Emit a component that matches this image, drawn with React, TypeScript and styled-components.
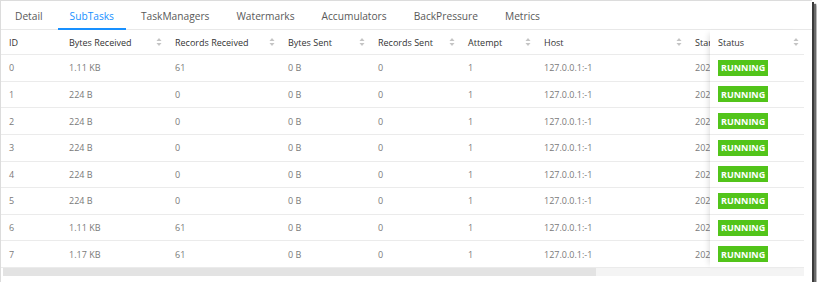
import React from 'react';
import styled, { createGlobalStyle } from 'styled-components';

const GlobalStyle = createGlobalStyle`
  html, body {
    margin: 0;
    padding: 0;
    background: #ffffff;
  }
  body {
    font-family: "Open Sans", "Noto Sans", sans-serif;
  }
`;

const tabs = ['Detail', 'SubTasks', 'TaskManagers', 'Watermarks', 'Accumulators', 'BackPressure', 'Metrics'];

// Start column is cut by the fixed Status column, so it only gets what is visible
const columns = [
  { key: 'id', title: 'ID', width: 60, sorter: false },
  { key: 'bytesIn', title: 'Bytes Received', width: 106, sorter: true },
  { key: 'recordsIn', title: 'Records Received', width: 113, sorter: true },
  { key: 'bytesOut', title: 'Bytes Sent', width: 90, sorter: true },
  { key: 'recordsOut', title: 'Records Sent', width: 90, sorter: true },
  { key: 'attempt', title: 'Attempt', width: 76, sorter: true },
  { key: 'host', title: 'Host', width: 151, sorter: true },
  { key: 'start', title: 'Start', width: 23, sorter: false },
];

const subtasks = [
  { id: '0', bytesIn: '1.11 KB', recordsIn: '61' },
  { id: '1', bytesIn: '224 B', recordsIn: '0' },
  { id: '2', bytesIn: '224 B', recordsIn: '0' },
  { id: '3', bytesIn: '224 B', recordsIn: '0' },
  { id: '4', bytesIn: '224 B', recordsIn: '0' },
  { id: '5', bytesIn: '224 B', recordsIn: '0' },
  { id: '6', bytesIn: '1.11 KB', recordsIn: '61' },
  { id: '7', bytesIn: '1.17 KB', recordsIn: '61' },
].map((r) => ({
  ...r,
  bytesOut: '0 B',
  recordsOut: '0',
  attempt: '1',
  host: '127.0.0.1:-1',
  start: '2020',
  status: 'RUNNING',
}));

const template = columns.map((c) => `${c.width}px`).join(' ');

const Frame = styled.div`
  width: 811px;
  height: 281px;
  border-top: 1px solid #dcdcdc;
  border-left: 1px solid #dcdcdc;
  background: #fff;
  box-shadow: 2px 2px 0 #3a3a3a, 4px 4px 1px #6a6a6a, 5px 5px 2px rgba(0, 0, 0, 0.3);
  display: flex;
  flex-direction: column;
  overflow: hidden;
`;

const TabBar = styled.div`
  display: flex;
  flex-shrink: 0;
  gap: 3px;
  height: 28px;
  padding-left: 2px;
  border-bottom: 1px solid #e8e8e8;
`;

const Tab = styled.div<{ $active?: boolean }>`
  display: flex;
  align-items: center;
  padding: 2px 12px 0;
  font-size: 10.2px;
  color: ${(p) => (p.$active ? '#1890ff' : '#595959')};
  border-bottom: 2px solid ${(p) => (p.$active ? '#1890ff' : 'transparent')};
  margin-bottom: -1px;
`;

const TableBox = styled.div`
  padding-right: 8px;
  display: flex;
  flex-direction: column;
`;

const Body = styled.div`
  display: flex;
`;

const ScrollPart = styled.div`
  width: 709px;
  flex-shrink: 0;
  overflow: hidden;
`;

const GridRow = styled.div<{ $head?: boolean }>`
  display: grid;
  grid-template-columns: ${template};
  height: ${(p) => (p.$head ? '25px' : '26.625px')};
  box-sizing: border-box;
  border-bottom: 1px solid #ebebeb;
`;

const HeadCell = styled.div`
  display: flex;
  align-items: center;
  justify-content: space-between;
  padding: 0 5px 0 8px;
  font-size: 9px;
  color: #333;
  white-space: nowrap;
  overflow: hidden;
  &:last-child {
    padding-right: 0;
  }
`;

const Cell = styled.div`
  display: flex;
  align-items: center;
  padding: 0 8px;
  font-size: 9px;
  color: #7a7a7a;
  white-space: nowrap;
  overflow: hidden;
  &:last-child {
    padding-right: 0;
  }
`;

const FixedCol = styled.div`
  width: 94px;
  flex-shrink: 0;
  background: #fff;
  box-shadow: -5px 0 6px -4px rgba(0, 0, 0, 0.14);
  position: relative;
  z-index: 1;
`;

const FixedRow = styled.div<{ $head?: boolean }>`
  height: ${(p) => (p.$head ? '25px' : '26.625px')};
  box-sizing: border-box;
  border-bottom: 1px solid #ebebeb;
  display: flex;
  align-items: center;
  justify-content: ${(p) => (p.$head ? 'space-between' : 'flex-start')};
  padding: 0 5px 0 8px;
  font-size: 9px;
  color: #333;
  white-space: nowrap;
`;

const Badge = styled.span`
  display: inline-flex;
  align-items: center;
  height: 16px;
  padding: 0 3px;
  background: #52c41a;
  color: #fff;
  font-weight: 700;
  font-size: 9px;
`;

const Scrollbar = styled.div`
  height: 8px;
  margin-left: 2px;
  background: #f4f4f4;
  display: flex;
`;

const Thumb = styled.div`
  width: 593px;
  background: #e3e3e3;
`;

function Sorter() {
  return (
    <svg width="6" height="10" viewBox="0 0 6 10">
      <path d="M3 1 L5.5 4 L0.5 4 Z" fill="#c4c4c4" />
      <path d="M3 9 L5.5 6 L0.5 6 Z" fill="#c4c4c4" />
    </svg>
  );
}

export default function App() {
  return (
    <>
      <GlobalStyle />
      <Frame>
        <TabBar>
          {tabs.map((t) => (
            <Tab key={t} $active={t === 'SubTasks'}>
              {t}
            </Tab>
          ))}
        </TabBar>
        <TableBox>
          <Body>
            <ScrollPart>
              <GridRow $head>
                {columns.map((c) => (
                  <HeadCell key={c.key}>
                    <span>{c.title}</span>
                    {c.sorter && <Sorter />}
                  </HeadCell>
                ))}
              </GridRow>
              {subtasks.map((row) => (
                <GridRow key={row.id}>
                  {columns.map((c) => (
                    <Cell key={c.key}>{row[c.key as keyof typeof row]}</Cell>
                  ))}
                </GridRow>
              ))}
            </ScrollPart>
            <FixedCol>
              <FixedRow $head>
                <span>Status</span>
                <Sorter />
              </FixedRow>
              {subtasks.map((row) => (
                <FixedRow key={row.id}>
                  <Badge>{row.status}</Badge>
                </FixedRow>
              ))}
            </FixedCol>
          </Body>
          <Scrollbar>
            <Thumb />
          </Scrollbar>
        </TableBox>
      </Frame>
    </>
  );
}
